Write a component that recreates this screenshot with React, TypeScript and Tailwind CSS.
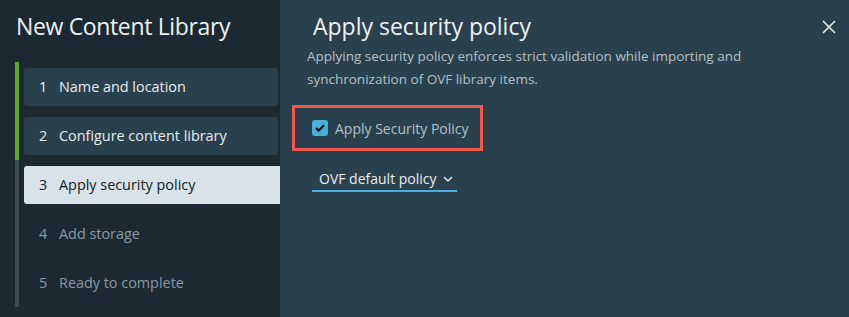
import clsx from 'clsx'

const STEPS = [
  { n: 1, label: 'Name and location', state: 'done' },
  { n: 2, label: 'Configure content library', state: 'done' },
  { n: 3, label: 'Apply security policy', state: 'active' },
  { n: 4, label: 'Add storage', state: 'todo' },
  { n: 5, label: 'Ready to complete', state: 'todo' },
] as const

const FONT = { fontFamily: '"Open Sans", "Liberation Sans", sans-serif' }

export default function App() {
  return (
    <div className="flex h-[317px] w-[849px] overflow-hidden" style={FONT}>
      <Sidebar />
      <SecurityPanel />
    </div>
  )
}

function Sidebar() {
  return (
    <div className="w-[280px] flex-shrink-0 bg-[#1b2a32]">
      <h1 className="pl-[16px] pt-[10px] text-[23px] leading-[32px] font-normal tracking-[-0.35px] text-[#eef1f3]">
        New Content Library
      </h1>
      <div className="mt-[20px] ml-[15px]">
        {STEPS.map((s) => (
          <div key={s.n} className="flex h-[49px]">
            <div className={clsx('w-[4px]', s.state === 'done' ? 'bg-[#62a420]' : 'bg-[#3e4c54]')} />
            <div
              className={clsx(
                'mt-[6px] ml-[5px] h-[38px] flex items-center rounded-[3px] text-[14.4px]',
                s.state === 'done' && 'w-[254px] bg-[#29404e] text-[#e8edf0]',
                s.state === 'active' && 'w-[256px] rounded-r-none bg-[#d8e3e9] text-[#0f1a20]',
                s.state === 'todo' && 'text-[#8b99a2]',
              )}
            >
              <span className="w-[35px] pl-[15px]">{s.n}</span>
              <span>{s.label}</span>
            </div>
          </div>
        ))}
      </div>
    </div>
  )
}

function SecurityPanel() {
  return (
    <div className="flex-1 bg-[#29404e] pt-[10px]">
      <div className="flex items-start justify-between">
        <h2 className="ml-[33px] text-[23px] leading-[32px] font-normal text-[#eef1f3]">Apply security policy</h2>
        <button className="mt-[10px] mr-[13px] text-[#e3e8eb]">
          <svg width="14" height="14" viewBox="0 0 14 14" fill="none" stroke="currentColor" strokeWidth="1.6">
            <path d="M1 1l12 12M13 1L1 13" />
          </svg>
        </button>
      </div>
      <p className="ml-[27px] mt-[3px] w-[460px] text-[13.5px] leading-[23px] text-[#b4c0c7]">
        Applying security policy enforces strict validation while importing and synchronization of OVF library items.
      </p>
      <div className="ml-[12px] mt-[14px] flex h-[46px] w-[191px] items-center border-[3px] border-[#f0584a]">
        <span className="ml-[17px] flex h-[16px] w-[16px] items-center justify-center rounded-[3px] bg-[#49afd9]">
          <svg width="10" height="8" viewBox="0 0 10 8" fill="none" stroke="#000" strokeWidth="2">
            <path d="M1 4l2.6 2.6L9 1.2" />
          </svg>
        </span>
        <span className="ml-[7px] text-[14px] text-[#b4c0c7]">Apply Security Policy</span>
      </div>
      <div className="ml-[32px] mt-[17px] flex w-[145px] items-center border-b-2 border-[#49afd9] pb-[1px] pl-[7px] text-[14px] text-[#e8edf0]">
        <span>OVF default policy</span>
        <svg className="ml-[6px]" width="10" height="6" viewBox="0 0 10 6" fill="none" stroke="currentColor" strokeWidth="1.4">
          <path d="M1 1l4 4 4-4" />
        </svg>
      </div>
    </div>
  )
}
